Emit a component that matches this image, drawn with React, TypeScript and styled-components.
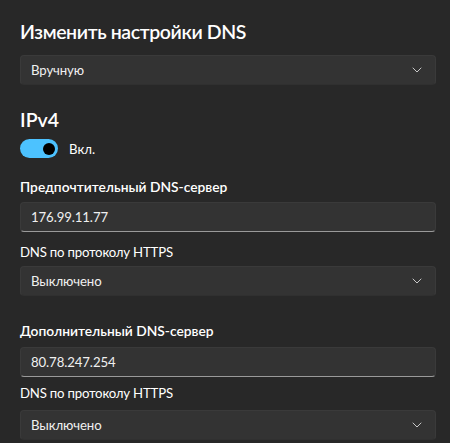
import React from "react";
import styled, { createGlobalStyle } from "styled-components";

const Global = createGlobalStyle`
  html, body {
    margin: 0;
    padding: 0;
    background: #282828;
  }
  body {
    font-family: Lato, "Open Sans", "Liberation Sans", sans-serif;
    color: #ffffff;
    -webkit-font-smoothing: antialiased;
  }
`;

const Page = styled.div`
  width: 450px;
  height: 443px;
  box-sizing: border-box;
  padding: 18px 14px 0 20px;
  display: flex;
  flex-direction: column;
  overflow: hidden;
`;

const Title = styled.h2`
  margin: 0;
  font-size: 19.5px;
  font-weight: 600;
  letter-spacing: -0.4px;
  line-height: 28px;
  color: #ffffff;
`;

const SectionTitle = styled.h3`
  margin: 0;
  font-size: 19.5px;
  font-weight: 600;
  line-height: 26px;
  color: #ffffff;
`;

const FieldLabel = styled.div<{ $bold?: boolean }>`
  font-size: ${(p) => (p.$bold ? "13.8px" : "13.2px")};
  font-weight: ${(p) => (p.$bold ? 600 : 400)};
  letter-spacing: ${(p) => (p.$bold ? "0px" : "-0.2px")};
  line-height: 20px;
  color: #ffffff;
`;

const Box = styled.div<{ $input?: boolean }>`
  height: 30px;
  box-sizing: border-box;
  border-radius: 4px;
  background: #333333;
  border: 1px solid #3a3a3a;
  border-bottom-color: ${(p) => (p.$input ? "#9a9a9a" : "#303030")};
  display: flex;
  align-items: center;
  justify-content: space-between;
  padding: 0 13px 0 10px;
  font-size: 13.2px;
  letter-spacing: -0.1px;
  color: #f0f0f0;
`;

const Chevron = () => (
  <svg width="10" height="6" viewBox="0 0 10 6" fill="none">
    <path d="M1 1l4 4 4-4" stroke="#c8c8c8" strokeWidth="1" strokeLinecap="round" strokeLinejoin="round" />
  </svg>
);

const Select = ({ value, mt }: { value: string; mt: number }) => (
  <Box style={{ marginTop: mt }}>
    <span>{value}</span>
    <Chevron />
  </Box>
);

const ToggleRow = styled.div`
  display: flex;
  align-items: center;
  gap: 11px;
  margin-top: 6px;
  font-size: 13.2px;
`;

const Track = styled.div<{ $on: boolean }>`
  width: 38px;
  height: 19px;
  border-radius: 10px;
  background: ${(p) => (p.$on ? "#4cc2ff" : "transparent")};
  display: flex;
  align-items: center;
  justify-content: ${(p) => (p.$on ? "flex-end" : "flex-start")};
  padding: 0 3px;
  box-sizing: border-box;
`;

const Knob = styled.div`
  width: 12px;
  height: 12px;
  border-radius: 50%;
  background: #000;
`;

const Group = styled.div<{ $mt: number }>`
  display: flex;
  flex-direction: column;
  margin-top: ${(p) => p.$mt}px;
`;

const Spaced = styled.div<{ $mt: number }>`
  margin-top: ${(p) => p.$mt}px;
`;

export default function App() {
  return (
    <>
      <Global />
      <Page>
        <Title>Изменить настройки DNS</Title>
        <Select value="Вручную" mt={9} />
        <Group $mt={22}>
          <SectionTitle>IPv4</SectionTitle>
          <ToggleRow>
            <Track $on>
              <Knob />
            </Track>
            <span>Вкл.</span>
          </ToggleRow>
        </Group>
        <Group $mt={19}>
          <FieldLabel $bold>Предпочтительный DNS-сервер</FieldLabel>
          <Spaced $mt={5}>
            <Box $input>176.99.11.77</Box>
          </Spaced>
          <Spaced $mt={10}>
            <FieldLabel>DNS по протоколу HTTPS</FieldLabel>
          </Spaced>
          <Select value="Выключено" mt={4} />
        </Group>
        <Group $mt={25}>
          <FieldLabel $bold>Дополнительный DNS-сервер</FieldLabel>
          <Spaced $mt={6}>
            <Box $input>80.78.247.254</Box>
          </Spaced>
          <Spaced $mt={6}>
            <FieldLabel>DNS по протоколу HTTPS</FieldLabel>
          </Spaced>
          <Select value="Выключено" mt={7} />
        </Group>
      </Page>
    </>
  );
}
